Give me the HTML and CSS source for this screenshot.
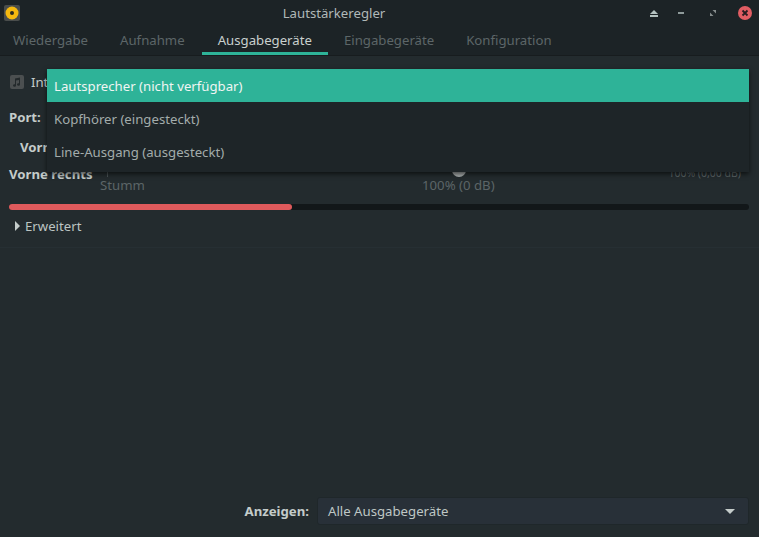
FILE: index.html
```html
<!DOCTYPE html>
<html lang="de">
<head>
    <meta charset="UTF-8">
    <title>Lautstärkeregler</title>
    <link rel="stylesheet" href="styles.css">
</head>
<body>
    <div class="window">
        <header class="titlebar">
            <svg class="app-icon" width="16" height="16" viewBox="0 0 16 16">
                <rect width="16" height="16" rx="2" fill="#4a4d4c"/>
                <circle cx="8" cy="8" r="6.5" fill="#f5b90f"/>
                <circle cx="8" cy="8" r="2" fill="#2a2a20"/>
            </svg>
            <div class="title">Lautstärkeregler</div>
            <div class="win-buttons">
                <svg class="btn-eject" width="8" height="7" viewBox="0 0 8 7"><path d="M4 0L8 4H0Z M0 5H8V7H0Z" fill="#b4c2c0"/></svg>
                <svg class="btn-min" width="6" height="2" viewBox="0 0 6 2"><rect width="6" height="2" fill="#8e9a9a"/></svg>
                <svg class="btn-max" width="6" height="6" viewBox="0 0 6 6"><path d="M2.5 0H6V3.5Z M0 2.5L3.5 6H0Z" fill="#858c8c"/></svg>
                <svg class="btn-close" width="14" height="14" viewBox="0 0 14 14">
                    <circle cx="7" cy="7" r="7" fill="#e25d63"/>
                    <path d="M4.5 4.5L9.5 9.5M9.5 4.5L4.5 9.5" stroke="#2a1d20" stroke-width="1.8"/>
                </svg>
            </div>
        </header>

        <nav class="tabs">
            <div class="tab">Wiedergabe</div>
            <div class="tab">Aufnahme</div>
            <div class="tab active">Ausgabegeräte</div>
            <div class="tab">Eingabegeräte</div>
            <div class="tab">Konfiguration</div>
        </nav>

        <main class="content">
            <section class="device">
                <div class="device-head">
                    <svg width="14" height="14" viewBox="0 0 14 14">
                        <rect width="14" height="14" rx="2" fill="#4b4f50"/>
                        <path d="M5 3.5L10 2.5V9.5A1.5 1.3 0 1 1 9 8.3V5L6 5.6V10.5A1.5 1.3 0 1 1 5 9.3Z" fill="#23292b"/>
                    </svg>
                    <span class="device-name">Internes Audio Analog Stereo</span>
                </div>
                <div class="port-row"><b>Port:</b></div>
                <div class="channel-left"><b>Vorne links</b></div>
                <div class="channel-right">
                    <b class="channel-label">Vorne rechts</b>
                    <div class="slider">
                        <div class="slider-track">
                            <span class="slider-tick"></span>
                            <span class="slider-thumb"></span>
                        </div>
                        <div class="marks">
                            <span class="mark-start">Stumm</span>
                            <span class="mark-mid">100% (0 dB)</span>
                        </div>
                    </div>
                    <span class="channel-value">100% (0,00 dB)</span>
                </div>
                <div class="level"><div class="level-fill"></div></div>
                <div class="expander"><span class="arrow"></span>Erweitert</div>
            </section>

            <div class="spacer"></div>

            <footer class="show-row">
                <b>Anzeigen:</b>
                <div class="combo">
                    <span>Alle Ausgabegeräte</span>
                    <span class="combo-arrow"></span>
                </div>
            </footer>
        </main>

        <ul class="popup">
            <li class="selected">Lautsprecher (nicht verfügbar)</li>
            <li>Kopfhörer (eingesteckt)</li>
            <li>Line-Ausgang (ausgesteckt)</li>
        </ul>
    </div>
</body>
</html>
```

FILE: styles.css
```css
html, body {
    margin: 0;
    padding: 0;
    height: 100%;
    overflow: hidden;
}

body {
    font-family: "Noto Sans", sans-serif;
    font-size: 13.2px;
    color: #c4ccca;
    background-color: #232b2e;
}

.window {
    position: relative;
    display: flex;
    flex-direction: column;
    height: 537px;
}

.titlebar {
    display: flex;
    align-items: center;
    height: 26px;
    padding: 0 7px 0 4px;
    background-color: #1c2326;
}

.app-icon {
    flex: none;
}

.title {
    flex: 1;
    text-align: center;
    color: #b0b8b8;
    padding-right: 2px;
}

.win-buttons {
    display: flex;
    align-items: center;
}

.btn-min {
    margin-left: 20px;
}

.btn-max {
    margin-left: 26px;
}

.btn-close {
    margin-left: 22px;
}

.tabs {
    display: flex;
    height: 29px;
    background-color: #1c2326;
    border-bottom: 1px solid #171c1e;
}

.tab {
    padding: 0 13px;
    margin-right: 6px;
    line-height: 29px;
    color: #5d6668;
}

.tab.active {
    color: #c9d0ce;
    padding: 0 16px;
    margin-left: -2px;
    margin-right: 3px;
    border-bottom: 3px solid #2eb398;
    height: 26px;
}

.content {
    flex: 1;
    display: flex;
    flex-direction: column;
}

.device {
    padding: 0 10px 0 9px;
    height: 191px;
    border-bottom: 1px solid #262f33;
}

.device-head {
    display: flex;
    align-items: center;
    gap: 7px;
    height: 18px;
    margin-top: 17px;
    margin-left: 1px;
}

.port-row {
    margin-top: 17px;
    height: 18px;
}

.channel-left {
    margin-top: 12px;
    margin-left: 11px;
    height: 18px;
}

.channel-right {
    position: relative;
    display: flex;
    margin-top: 9px;
    height: 39px;
}

.channel-label {
    width: 91px;
    flex: none;
}

.slider {
    flex: 1;
}

.slider-track {
    position: relative;
    height: 4px;
}

.slider-tick {
    position: absolute;
    left: 7px;
    top: 0;
    width: 1px;
    height: 12px;
    background-color: #4a5355;
}

.slider-thumb {
    position: absolute;
    left: 352px;
    top: -2px;
    width: 14px;
    height: 14px;
    border-radius: 50%;
    background-color: #a9aeae;
}

.marks {
    position: relative;
    color: #5c6567;
    height: 18px;
    margin-top: 7px;
}

.mark-mid {
    position: absolute;
    left: 322px;
}

.channel-value {
    color: #5c6567;
    position: absolute;
    right: 8px;
    top: 1px;
    font-size: 10.5px;
}

.level {
    height: 6px;
    background-color: #121719;
    border-radius: 3px;
}

.level-fill {
    width: 283px;
    height: 6px;
    background-color: #df5a5c;
    border-radius: 3px;
}

.expander {
    display: flex;
    align-items: center;
    margin: 7px 0 0 6px;
    height: 18px;
    color: #bcc4c2;
}

.arrow {
    width: 0;
    height: 0;
    margin-right: 5px;
    border-left: 5px solid #c4ccca;
    border-top: 5px solid transparent;
    border-bottom: 5px solid transparent;
}

.spacer {
    flex: 1;
}

.show-row {
    display: flex;
    align-items: center;
    justify-content: flex-end;
    gap: 8px;
    height: 28px;
    padding: 0 10px 12px 0;
}

.combo {
    display: flex;
    align-items: center;
    justify-content: space-between;
    box-sizing: border-box;
    width: 432px;
    height: 28px;
    padding: 0 13px 0 10px;
    background-color: #283038;
    border: 1px solid #1f272a;
    border-radius: 3px;
    color: #bfc7c5;
}

.combo-arrow {
    width: 0;
    height: 0;
    border-top: 5px solid #c4ccca;
    border-left: 5px solid transparent;
    border-right: 5px solid transparent;
}

.popup {
    position: absolute;
    left: 47px;
    top: 69px;
    width: 702px;
    margin: 0;
    padding: 0;
    list-style: none;
    height: 103px;
    background-color: #1e2528;
    color: #a3acab;
    box-shadow: 0 2px 5px rgba(0, 0, 0, 0.65);
}

.popup li {
    height: 33px;
    line-height: 35px;
    padding-left: 7px;
}

.popup li.selected {
    background-color: #2eb398;
    color: #f0f5f3;
}
```
